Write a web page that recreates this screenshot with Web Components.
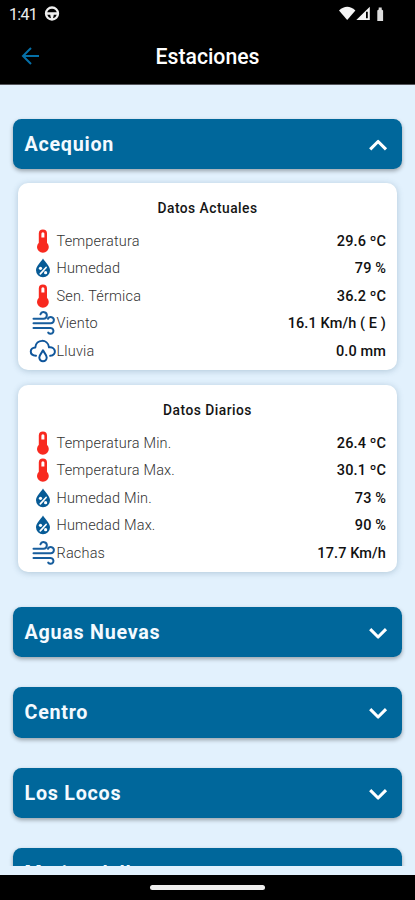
<!DOCTYPE html>
<html lang="es"><head><meta charset="utf-8"><title>Estaciones</title>
<style>html,body{margin:0;height:100%;background:#e2f1fd}body{font-family:Roboto,sans-serif;overflow:hidden}</style></head>
<body>
<weather-app>
<status-bar slot="top"></status-bar>
<app-header slot="top">Estaciones</app-header>
<station-bar name="Acequion" open>
<data-card heading="Datos Actuales">
<data-row icon="temp" value="29.6 ºC">Temperatura</data-row>
<data-row icon="drop" value="79 %">Humedad</data-row>
<data-row icon="temp" value="36.2 ºC">Sen. Térmica</data-row>
<data-row icon="wind" value="16.1 Km/h ( E )">Viento</data-row>
<data-row icon="rain" value="0.0 mm">Lluvia</data-row>
</data-card>
<data-card heading="Datos Diarios">
<data-row icon="temp" value="26.4 ºC">Temperatura Min.</data-row>
<data-row icon="temp" value="30.1 ºC">Temperatura Max.</data-row>
<data-row icon="drop" value="73 %">Humedad Min.</data-row>
<data-row icon="drop" value="90 %">Humedad Max.</data-row>
<data-row icon="wind" value="17.7 Km/h">Rachas</data-row>
</data-card>
</station-bar>
<station-bar name="Aguas Nuevas"></station-bar>
<station-bar name="Centro"></station-bar>
<station-bar name="Los Locos"></station-bar>
<station-bar name="Marina dell"></station-bar>
</weather-app>
<script>
const ICONS={
temp:`<svg width="28" height="26" viewBox="0 0 28 26"><path d="M9.800 5.500a4.100 4.100 0 0 1 8.200 0v9.200a5.900 5.900 0 1 1-8.200 0z" fill="#f8291f"/><path d="M12.400 5.700a1.500 1.500 0 0 1 3 0v3.800h-3z" fill="#fff"/></svg>`,
drop:`<svg width="28" height="26" viewBox="0 0 28 26"><path d="M14 3.500c2.200 3.800 7 7.400 7 11.800a7 7 0 0 1-14 0c0-4.400 4.800-8 7-11.800z" fill="#075b96"/><path d="M11.300 18.800l5.800-6.300" stroke="#fff" stroke-width="1.700" stroke-linecap="round"/><circle cx="11.500" cy="13.300" r="1.600" fill="#fff"/><circle cx="16.600" cy="17.700" r="1.600" fill="#fff"/></svg>`,
wind:`<svg width="28" height="26" viewBox="0 0 28 26" fill="none" stroke="#175d9d" stroke-width="2" stroke-linecap="round"><path d="M4.500 8.700H14.500a3.300 3.300 0 1 0-3.100-4.400M4.500 13.300H21.800a3.100 3.100 0 1 0-2.800-4.500M4.500 18H21.500a2.900 2.900 0 1 1-2.300 4.600"/></svg>`,
rain:`<svg width="28" height="26" viewBox="0 0 28 26" fill="none" stroke="#0e559b" stroke-width="2" stroke-linecap="round" stroke-linejoin="round"><path d="M7 17.800C-.3 17.400.6 9.500 6.300 9.500 7 .8 19 .6 20 9.300c7-.8 8.200 7.800 1.200 8.500M14 12.300c1.200 2.500 3.700 4.500 3.700 7.300a3.700 3.700 0 0 1-7.400 0c0-2.800 2.500-4.800 3.700-7.300z"/></svg>`};
function define(name,render){customElements.define(name,class extends HTMLElement{connectedCallback(){if(!this.shadowRoot)this.attachShadow({mode:'open'}).innerHTML=render(this)}})}
define('weather-app',()=>`<style>
:host{display:flex;flex-direction:column;height:900px;width:415px;background:#e2f1fd}
.top{height:85px;background:linear-gradient(#000 84px,#55565b 84px);flex:none}
main{flex:1;min-height:0;overflow:hidden;padding:34px 13px 0;box-sizing:border-box;display:flex;flex-direction:column;gap:30px}
footer{flex:none;height:25px;margin-top:9px;background:#000;display:flex;justify-content:center;padding-top:10px;box-sizing:border-box}
i{width:115px;height:5px;border-radius:3px;background:#eee}
</style><div class="top"><slot name="top"></slot></div><main><slot></slot></main><footer><i></i></footer>`);
define('status-bar',()=>`<style>
:host{display:flex;align-items:center;height:28px;padding-left:9px;color:#eee;font-size:16px;letter-spacing:-.7px}
span{width:35px}.r{margin-left:auto;margin-right:30px}svg{display:block}
</style><span>1:41</span><svg width="16" height="16" viewBox="0 0 16 16"><circle cx="8" cy="7.500" r="6" fill="none" stroke="#eee" stroke-width="2.300"/><path d="M2 6.200h12v2.500h-4.200L8.900 13H7.100l-.9-4.300H2z" fill="#eee"/></svg>
<svg class="r" width="46" height="16" viewBox="0 0 46 16" fill="#f4f4f4"><path d="M0 4.500Q8.200-3 16.400 4.500L8.200 14z"/><path fill-rule="evenodd" d="M17.300 14L30.800.8V14zM27 5.800v6.500h1.800V5.800z"/><path d="M38.300 4.500l1.400-1V1.500h3v2l1.400 1V15h-5.800z" fill="#ddd"/></svg>`);
define('app-header',()=>`<style>
:host{display:grid;grid-template-columns:48px 1fr 48px;align-items:center;height:56px;color:#fff;font-size:21.200px;font-weight:500;text-align:center}
svg{margin-left:21px;margin-top:-1px}
</style><svg width="20" height="20" viewBox="0 0 20 20" fill="none" stroke="#0570a8" stroke-width="2"><path d="M18 10H2M10 2L2 10l8 8"/></svg><div><slot></slot></div>`);
define('station-bar',e=>`<style>
:host{display:block;flex:none}
header{display:flex;align-items:center;justify-content:space-between;box-sizing:border-box;height:50.400px;padding:0 14px 0 11.500px;background:#00679b;color:#f4faff;border-radius:8.500px;box-shadow:0 2px 4px #0005;font-size:19.700px;font-weight:700;letter-spacing:.750px}
span{padding-top:1px}svg{display:block}
.body{display:flex;flex-direction:column;gap:15px;padding:13.500px 5px 5px}
</style><header><span>${e.getAttribute('name')}</span><svg width="20" height="20" viewBox="0 0 20 20" fill="none" stroke="#fff" stroke-width="3.100" stroke-linejoin="round"><path d="${e.hasAttribute('open')?'M2.200 15.300l7.900-7.800 7.900 7.800':'M2.200 7.200l7.900 7.800 7.900-7.800'}"/></svg></header>${e.hasAttribute('open')?'<div class="body"><slot></slot></div>':''}`);
define('data-card',e=>`<style>
:host{display:block;height:187px;box-sizing:border-box;padding:17px 11px 0 11px;border-radius:10px;background:#fff;box-shadow:0 1px 6px #315b7a48;color:#151515}
h2{margin:0 0 11px;font-size:13.800px;line-height:16px;font-weight:500;text-align:center;letter-spacing:.480px}
</style><h2>${e.getAttribute('heading')}</h2><slot></slot>`);
define('data-row',e=>`<style>
:host{display:flex;align-items:center;height:27.500px;font-size:14.500px;letter-spacing:.180px;color:#333;font-weight:300}
svg{display:block;flex:none}span,b{padding-top:1px}span{margin-left:-.5px}b{margin-left:auto;font-weight:500;letter-spacing:.1px;color:#111}
</style>${ICONS[e.getAttribute('icon')]}<span><slot></slot></span><b>${e.getAttribute('value')}</b>`);
</script></body></html>
